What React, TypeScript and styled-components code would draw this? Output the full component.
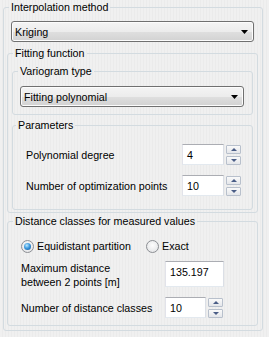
import React, { useState } from 'react';
import styled, { createGlobalStyle } from 'styled-components';

const GlobalStyle = createGlobalStyle`
	html, body {
		margin: 0;
		padding: 0;
	}
	body {
		background: repeating-linear-gradient(90deg, #f0f0f0 0 2px, #ebebeb 2px 3px);
		font-family: 'Liberation Sans', Arial, sans-serif;
		font-size: 10.7px;
		color: #000;
	}
`;

const Page = styled.div`
	width: 269px;
	height: 337px;
	box-sizing: border-box;
	padding: 1px 6px 0 3px;
`;

const Group = styled.fieldset<{ $pad: string }>`
	margin: 0;
	min-width: 0;
	padding: ${(p) => p.$pad};
	border: 1px solid #d3dbe0;
	border-radius: 3px;
	display: flex;
	flex-direction: column;
`;

const Title = styled.legend<{ $offset: number }>`
	margin-left: ${(p) => p.$offset}px;
	padding: 0 2px;
	line-height: 13px;
	font-size: 10.7px;
	white-space: nowrap;
`;

const Combo = styled.div<{ $inset: string }>`
	margin: ${(p) => p.$inset};
	height: 21px;
	box-sizing: border-box;
	display: flex;
	align-items: center;
	justify-content: space-between;
	padding: 0 5px 0 3px;
	border: 1px solid #707070;
	border-radius: 3px;
	background: linear-gradient(#f4f4f4 0%, #ececec 50%, #dfdfdf 51%, #d2d2d2 100%);
	box-shadow: inset 0 0 0 1px #fcfcfc;
	cursor: default;
`;

const Arrow = () => (
	<svg width="7" height="4" viewBox="0 0 7 4">
		<polygon points="0,0 7,0 3.5,4" fill="#000" />
	</svg>
);

const ParamRow = styled.div`
	display: grid;
	grid-template-columns: 154px 42px auto;
	align-items: center;
	column-gap: 2px;
	height: 21px;
`;

const DistRow = styled.div<{ $h: number }>`
	display: grid;
	grid-template-columns: 142px auto auto;
	justify-content: start;
	align-items: center;
	column-gap: 2px;
	min-height: ${(p) => p.$h}px;
`;

const Label = styled.span`
	line-height: 14px;
	white-space: nowrap;
`;

const Field = styled.div<{ $w: number; $h: number }>`
	width: ${(p) => p.$w}px;
	height: ${(p) => p.$h}px;
	box-sizing: border-box;
	padding: 0 4px;
	display: flex;
	align-items: ${(p) => (p.$h > 22 ? 'flex-start' : 'center')};
	padding-top: ${(p) => (p.$h > 22 ? '4px' : '0')};
	background: #fff;
	border: 1px solid;
	border-color: #abadb3 #dbdfe6 #e3e9ef #e2e3ea;
	align-self: start;
`;

const Spin = styled.div`
	height: 20px;
	display: flex;
	flex-direction: column;
	justify-content: space-between;
	align-self: start;
	padding-top: 1px;
`;

const SpinButton = styled.div<{ $down?: boolean }>`
	width: 15px;
	height: 9px;
	box-sizing: border-box;
	display: flex;
	align-items: center;
	justify-content: center;
	border: 1px solid #b8c0cc;
	border-radius: 1px;
	background: linear-gradient(#fafafa, #e4e6ea);
	&::after {
		content: '';
		width: 0;
		height: 0;
		border-left: 3px solid transparent;
		border-right: 3px solid transparent;
		${(p) => (p.$down ? 'border-top: 3px solid #4a5d86;' : 'border-bottom: 3px solid #4a5d86;')}
	}
`;

const RadioRow = styled.div`
	display: grid;
	grid-template-columns: 125px auto;
	align-items: center;
	height: 14px;
`;

const RadioOption = styled.label`
	display: flex;
	align-items: center;
	gap: 3px;
	white-space: nowrap;
	cursor: default;
`;

const RadioDot = styled.span<{ $on: boolean }>`
	width: 13px;
	height: 13px;
	box-sizing: border-box;
	border-radius: 50%;
	border: 1px solid #8c8f94;
	background: radial-gradient(circle at 50% 40%, #fdfdfd 0, #e2e3e5 90%);
	display: flex;
	align-items: center;
	justify-content: center;
	&::after {
		content: '';
		width: 7px;
		height: 7px;
		border-radius: 50%;
		display: ${(p) => (p.$on ? 'block' : 'none')};
		background: radial-gradient(circle at 40% 35%, #bfe9fd 0, #3d9be0 45%, #0d4f93 100%);
	}
`;

function SpinBox({ value, w }: { value: string; w: number }) {
	return (
		<>
			<Field $w={w} $h={21}>
				{value}
			</Field>
			<Spin>
				<SpinButton />
				<SpinButton $down />
			</Spin>
		</>
	);
}

export default function App() {
	const [mode, setMode] = useState('equi');

	return (
		<Page>
			<GlobalStyle />
			<Group $pad="7px 4px 4px 3px">
				<Title $offset={2}>Interpolation method</Title>
				<Combo $inset="0 4px">
					<span>Kriging</span>
					<Arrow />
				</Combo>

				<Group $pad="5px 4px 2px 4px" style={{ marginTop: 5 }}>
					<Title $offset={1}>Fitting function</Title>
					<Group $pad="8px 8px 7px 7px">
						<Title $offset={-2}>Variogram type</Title>
						<Combo $inset="0">
							<span>Fitting polynomial</span>
							<Arrow />
						</Combo>
					</Group>

					<Group $pad="12px 14px 13px 13px" style={{ marginTop: 4 }}>
						<Title $offset={-10}>Parameters</Title>
						<ParamRow>
							<Label>Polynomial degree</Label>
							<SpinBox value="4" w={42} />
						</ParamRow>
						<ParamRow style={{ marginTop: 10 }}>
							<Label>Number of optimization points</Label>
							<SpinBox value="10" w={42} />
						</ParamRow>
					</Group>
				</Group>

				<Group $pad="11px 4px 7px 13px" style={{ marginTop: 2 }}>
					<Title $offset={-8}>Distance classes for measured values</Title>
					<RadioRow>
						<RadioOption onClick={() => setMode('equi')}>
							<RadioDot $on={mode === 'equi'} />
							Equidistant partition
						</RadioOption>
						<RadioOption onClick={() => setMode('exact')}>
							<RadioDot $on={mode === 'exact'} />
							Exact
						</RadioOption>
					</RadioRow>
					<DistRow $h={28} style={{ marginTop: 8 }}>
						<Label>
							Maximum distance
							<br />
							between 2 points [m]
						</Label>
						<Field $w={59} $h={26}>
							135.197
						</Field>
					</DistRow>
					<DistRow $h={21} style={{ marginTop: 8 }}>
						<Label>Number of distance classes</Label>
						<SpinBox value="10" w={41} />
					</DistRow>
				</Group>
			</Group>
		</Page>
	);
}
